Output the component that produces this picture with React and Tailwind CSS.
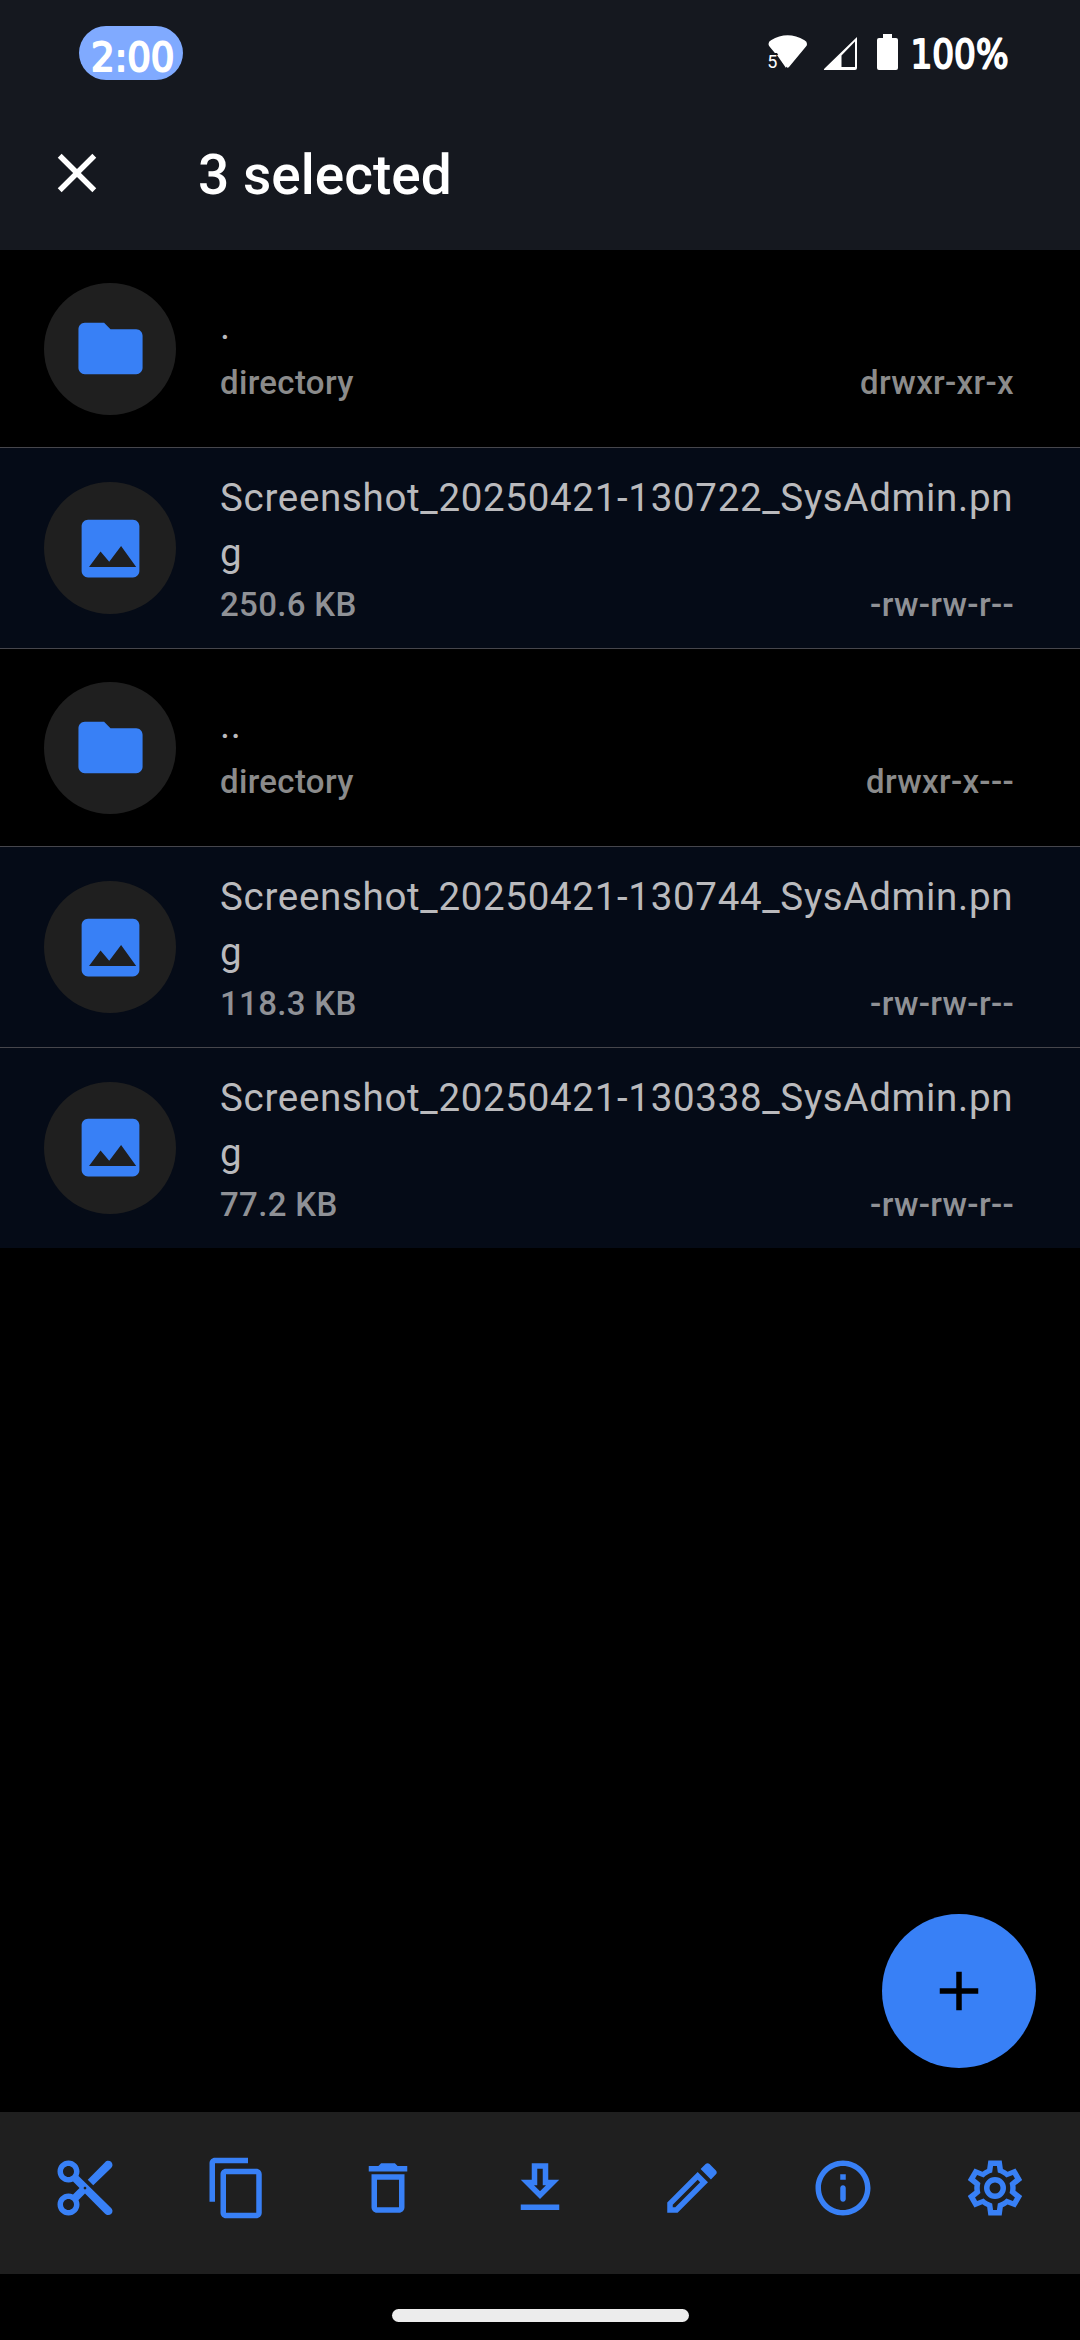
const rows = [
  { kind: "dir", name: ".", info: "directory", perm: "drwxr-xr-x", selected: false },
  { kind: "img", name: "Screenshot_20250421-130722_SysAdmin.png", info: "250.6 KB", perm: "-rw-rw-r--", selected: true },
  { kind: "dir", name: "..", info: "directory", perm: "drwxr-x---", selected: false },
  { kind: "img", name: "Screenshot_20250421-130744_SysAdmin.png", info: "118.3 KB", perm: "-rw-rw-r--", selected: true },
  { kind: "img", name: "Screenshot_20250421-130338_SysAdmin.png", info: "77.2 KB", perm: "-rw-rw-r--", selected: true },
];

const paths = {
  close: "M19 6.41L17.59 5 12 10.59 6.41 5 5 6.41 10.59 12 5 17.59 6.41 19 12 13.41 17.59 19 19 17.59 13.41 12z",
  plus: "M19 13h-6v6h-2v-6H5v-2h6V5h2v6h6z",
  dir: "M10 4H4c-1.1 0-1.99.9-1.99 2L2 18c0 1.1.9 2 2 2h16c1.1 0 2-.9 2-2V8c0-1.1-.9-2-2-2h-8l-2-2z",
  img: "M19 3H5c-1.1 0-2 .9-2 2v14c0 1.1.9 2 2 2h14c1.1 0 2-.9 2-2V5c0-1.1-.9-2-2-2zM5.3 17.8l3.600-4.900 2.700 3.200 3.700-4.900 4.700 6.600H5.3z",
  cut: "M9.64 7.64c.23-.5.36-1.05.36-1.64 0-2.21-1.79-4-4-4S2 3.79 2 6s1.79 4 4 4c.59 0 1.14-.13 1.64-.36L10 12l-2.36 2.36C7.14 14.13 6.59 14 6 14c-2.21 0-4 1.79-4 4s1.79 4 4 4 4-1.79 4-4c0-.59-.13-1.14-.36-1.64L12 14l7.3 7.4c.9.9 2.7.4 2.7-1 0-.4-.2-.8-.5-1.1L9.64 7.64zM6 8c-1.1 0-2-.9-2-2s.9-2 2-2 2 .9 2 2-.9 2-2 2zm0 12c-1.1 0-2-.9-2-2s.9-2 2-2 2 .9 2 2-.9 2-2 2zm6-7.5c-.28 0-.5-.22-.5-.5s.22-.5.5-.5.5.22.5.5-.22.5-.5.5zM13 9l6.3-6.4c.9-1 2.7-.4 2.7 1 0 .4-.2.8-.5 1.1L15 11z",
  copy: "M16 1H4c-1.1 0-2 .9-2 2v14h2V3h12V1zm3 4H8c-1.1 0-2 .9-2 2v14c0 1.1.9 2 2 2h11c1.1 0 2-.9 2-2V7c0-1.1-.9-2-2-2zm0 16H8V7h11v14z",
  trash: "M16 9v10H8V9h8m-1.5-6h-5l-1 1H5v2h14V4h-3.5l-1-1zM18 7H6v12c0 1.1.9 2 2 2h8c1.1 0 2-.9 2-2V7z",
  download: "M19 9h-4V3H9v6H5l7 7 7-7zm-8 2V5h2v6h1.17L12 13.17 9.83 11H11zm-6 7h14v2H5z",
  edit: "M14.06 9.02l.92.92L5.92 19H5v-.92l9.06-9.06M17.66 3c-.25 0-.51.1-.7.29l-1.83 1.83 3.75 3.75 1.83-1.83c.39-.39.39-1.02 0-1.41l-2.34-2.34c-.2-.2-.45-.29-.71-.29zm-3.6 3.19L3 17.25V21h3.75L17.81 9.94l-3.75-3.75z",
  info: "M11 7h2v2h-2V7zm1 10c.55 0 1-.45 1-1v-4c0-.55-.45-1-1-1s-1 .45-1 1v4c0 .55.45 1 1 1zm0-15C6.48 2 2 6.48 2 12s4.48 10 10 10 10-4.48 10-10S17.52 2 12 2zm0 18c-4.41 0-8-3.59-8-8s3.59-8 8-8 8 3.59 8 8-3.59 8-8 8z",
  gear: "M9.57 2h4.87l.44 3.07c.62.26 1.19.6 1.7 1l2.87-1.17 2.43 4.22-2.44 1.9c.1.65.1 1.3 0 1.97l2.44 1.92-2.43 4.2-2.88-1.15c-.53.41-1.1.75-1.72 1.01L14.43 22H9.58l-.44-3.07c-.63-.26-1.2-.6-1.73-1.01l-2.88 1.15-2.43-4.2 2.43-1.9c-.1-.67-.1-1.3 0-1.97L2.11 9.12 4.55 4.9l2.88 1.17c.52-.4 1.09-.74 1.71-1zM11.3 4l-.33 2.4c-1.2.35-2.2.9-3.1 1.8L5.5 7.3l-.75 1.25 1.95 1.6c-.33 1.25-.33 2.45 0 3.7l-1.95 1.6.75 1.25 2.37-.9c.9.9 1.9 1.45 3.1 1.8L11.3 20h1.4l.33-2.4c1.2-.35 2.2-.9 3.1-1.8l2.37.9.75-1.25-1.95-1.6c.33-1.25.33-2.45 0-3.7l1.95-1.6-.75-1.25-2.37.9c-.9-.9-1.9-1.45-3.1-1.8L12.7 4zM12 8a4 4 0 100 8 4 4 0 000-8zm0 2a2 2 0 110 4 2 2 0 010-4z",
};

function Icon({ name, className }) {
  return (
    <svg viewBox="0 0 24 24" className={className} fill="currentColor" fillRule="evenodd">
      <path d={paths[name]} />
    </svg>
  );
}

function StatusText({ children, x, y, length, viewBox, className }) {
  return (
    <svg viewBox={viewBox} className={"h-[54px] shrink-0 overflow-visible " + className}>
      <text
        x={x}
        y={y}
        fontSize="39"
        fontFamily="DejaVu Sans"
        textLength={length}
        lengthAdjust="spacingAndGlyphs"
        fill="white"
        stroke="white"
        strokeWidth="2"
        strokeLinejoin="round"
      >
        {children}
      </text>
    </svg>
  );
}

function StatusBar() {
  return (
    <div className="flex h-[106px] items-start justify-between pt-[26px] pr-[62px] pl-[79px]">
      <div className="flex h-[54px] w-[104px] justify-center rounded-full bg-[#80aaff]">
        <StatusText x="6" y="44.5" length="83.5" viewBox="0 0 92 54" className="w-[92px]">2:00</StatusText>
      </div>
      <div className="flex h-[54px] text-white">
        <svg viewBox="766 26 142 54" className="h-[54px] w-[142px]" fill="white">
          <path d="M768.5 44q0-2.500 2.500-3.800 16.500-9.700 33.500 0 2.500 1.300 2.500 3.800 0 1.500-1 2.600L789 67q-1.300 1.400-2.600 0L769.500 46.600q-1-1.200-1-2.600z" />
          <path d="M766 53h11l5 8v10h-16z" fill="#15181f" />
          <path d="M777 55l9 13v-14z" />
          <text x="767.300" y="68" fontSize="18" fontFamily="Roboto">5</text>
          <path fillRule="evenodd" d="M857 37v31q0 2-2 2h-30q-2 0-.5-1.500zM855 41.500L841.500 55.500v11.500h13.500z" />
          <path d="M883 34h9v4h4q2 0 2 2v28q0 2-2 2h-17q-2 0-2-2V40q0-2 2-2h4z" />
        </svg>
        <StatusText x="2.5" y="42" length="98" viewBox="0 0 110 54" className="w-[110px]">100%</StatusText>
      </div>
    </div>
  );
}

function Row({ row, last }) {
  const dir = row.kind === "dir";
  return (
    <li
      className={
        "flex items-center pr-[66px] pl-[44px] " +
        (dir ? "h-[198px] " : last ? "h-[200px] pb-px " : "h-[201px] ") +
        (row.selected ? "bg-[#050b17] " : "bg-black ") +
        (last ? "" : "border-b border-[#46464c]")
      }
    >
      <div className="mr-[44px] flex size-[132px] shrink-0 items-center justify-center rounded-full bg-[#1f1f1f] text-[#3880f6]">
        <Icon name={row.kind} className="size-[77px]" />
      </div>
      <div className={"min-w-0 flex-1 " + (dir ? "pt-[5px]" : "pt-px")}>
        <div className="text-[38.5px] leading-[55px] tracking-[0.690px] break-all text-[#bababd]">{row.name}</div>
        <div
          className={
            "flex justify-between text-[33px] leading-[44px] font-medium tracking-[0.330px] " +
            (dir ? "mt-[8px] text-[#8b8b8b]" : "mt-[3px] text-[#8f9196]")
          }
        >
          <span>{row.info}</span>
          <span>{row.perm}</span>
        </div>
      </div>
    </li>
  );
}

export default function App() {
  const tools = ["cut", "copy", "trash", "download", "edit", "info", "gear"];
  return (
    <div className="relative flex h-[2340px] w-[1080px] flex-col overflow-hidden bg-black font-['Roboto',sans-serif]">
      <header className="h-[250px] bg-[#15181f] text-white">
        <StatusBar />
        <div className="flex h-[134px] items-center pl-[44px]">
          <Icon name="close" className="size-[66px]" />
          <h1 className="ml-[88px] pt-[3px] text-[55px] leading-[66px] font-medium">3 selected</h1>
        </div>
      </header>
      <ul className="flex-1">
        {rows.map((row, i) => (
          <Row key={row.name} row={row} last={i === rows.length - 1} />
        ))}
      </ul>
      <button className="absolute right-[44px] bottom-[272px] flex size-[154px] items-center justify-center rounded-full bg-[#3880f6] text-black">
        <Icon name="plus" className="size-[66px]" />
      </button>
      <nav className="flex h-[162px] justify-between bg-[#1f1f1f] px-[52px] pt-[43px] text-[#3880f6]">
        {tools.map((t) => (
          <Icon key={t} name={t} className="size-[66px]" />
        ))}
      </nav>
      <div className="flex h-[66px] justify-center pt-[35px]">
        <div className="h-[13px] w-[297px] rounded-full bg-[#ececec]" />
      </div>
    </div>
  );
}
